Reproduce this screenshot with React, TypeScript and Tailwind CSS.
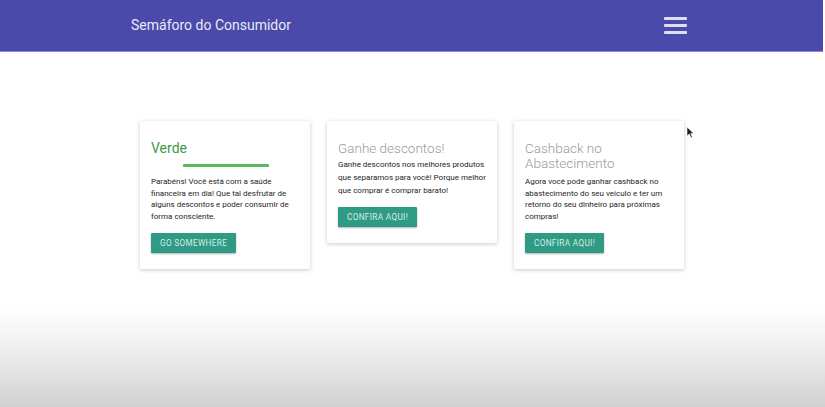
import React from "react";

const font = { fontFamily: "Roboto, 'Liberation Sans', sans-serif" };

function Card({
  title,
  titleClass,
  textClass,
  children,
  button,
  divider,
}: {
  title: React.ReactNode;
  titleClass: string;
  textClass: string;
  children: React.ReactNode;
  button: string;
  divider?: boolean;
}) {
  return (
    <div className="w-[170px] bg-white shadow-[0_1px_4px_rgba(0,0,0,0.22)] px-[11px] pt-[17px] pb-[16px] flex flex-col">
      <div className={titleClass}>{title}</div>
      {divider && <div className="ml-[32px] mt-[6px] mb-[9px] h-[3px] w-[86px] bg-[#5cb85c] rounded-[1px]" />}
      <p className={`text-[8px] text-[#262626] ${textClass}`}>{children}</p>
      <div className="mt-[6px]">
        <button className="h-[20px] px-[9px] bg-[#2f9b85] text-[#d4ece6] text-[8.2px] tracking-[0.35px] uppercase shadow-[0_1px_2px_rgba(0,0,0,0.3)] rounded-[1px]">
          {button}
        </button>
      </div>
    </div>
  );
}

export default function App() {
  return (
    <div className="w-[825px] h-[407px] flex flex-col bg-white overflow-hidden relative" style={font}>
      <header className="h-[52px] w-[823px] bg-[#4a4aab] border-b border-[#8a8ad0] flex items-center shrink-0">
        <div className="pl-[131px] text-[14px] text-[#e9e9f6] flex-1">Semáforo do Consumidor</div>
        <div className="mr-[136px] flex flex-col gap-[4.5px]">
          <div className="w-[23px] h-[2.5px] bg-[#dedef2] rounded-[1px]" />
          <div className="w-[23px] h-[2.5px] bg-[#dedef2] rounded-[1px]" />
          <div className="w-[23px] h-[2.5px] bg-[#dedef2] rounded-[1px]" />
        </div>
      </header>
      <main className="flex-1 flex items-start gap-[17px] pl-[140px] pt-[69px] bg-[linear-gradient(to_bottom,#ffffff_0px,#ffffff_255px,#f2f2f2_290px,#d2d2d2_354px)]">
        <Card
          title="Verde"
          titleClass="text-[14px] leading-[20px] text-[#3f9a3f]"
          textClass="leading-[11.7px]"
          button="Go somewhere"
          divider
        >
          Parabéns! Você está com a saúde financeira em dia! Que tal desfrutar de alguns descontos e poder consumir de forma consciente.
        </Card>
        <Card
          title="Ganhe descontos!"
          titleClass="text-[13.5px] leading-[20px] font-light text-[#9a9a9a]"
          textClass="leading-[13px]"
          button="Confira aqui!"
        >
          Ganhe descontos nos melhores produtos que separamos para você! Porque melhor que comprar é comprar barato!
        </Card>
        <Card
          title={<>Cashback no<br />Abastecimento</>}
          titleClass="text-[13.5px] leading-[14.5px] pt-[3px] font-light text-[#9a9a9a]"
          textClass="leading-[11.7px] mt-[6px]"
          button="Confira aqui!"
        >
          Agora você pode ganhar cashback no abastecimento do seu veículo e ter um retorno do seu dinheiro para próximas compras!
        </Card>
      </main>
      <svg className="absolute left-[686px] top-[126px]" width="9" height="13" viewBox="0 0 9 13">
        <path d="M1 1 L1 10 L3.3 8 L5 11.8 L6.4 11.2 L4.8 7.6 L7.8 7.6 Z" fill="#222" stroke="#fff" strokeWidth="0.6" />
      </svg>
    </div>
  );
}
